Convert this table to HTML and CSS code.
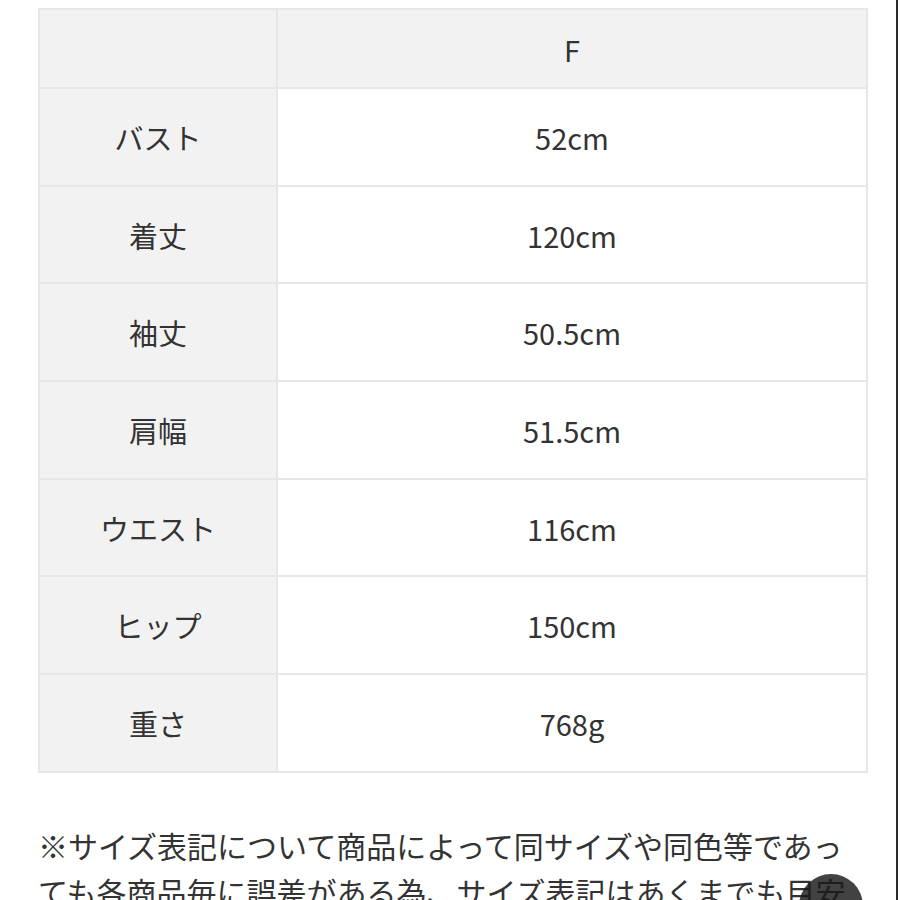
FILE: index.html
```html
<!DOCTYPE html>
<html lang="ja">
<head>
<meta charset="utf-8">
<title>サイズ表</title>
<link rel="stylesheet" href="styles.css">
</head>
<body>
<div class="page">
  <table class="size-table">
    <thead>
      <tr><th class="label head"></th><th class="value head">F</th></tr>
    </thead>
    <tbody>
      <tr><th class="label">バスト</th><td class="value">52cm</td></tr>
      <tr><th class="label">着丈</th><td class="value">120cm</td></tr>
      <tr><th class="label">袖丈</th><td class="value">50.5cm</td></tr>
      <tr><th class="label">肩幅</th><td class="value">51.5cm</td></tr>
      <tr><th class="label">ウエスト</th><td class="value">116cm</td></tr>
      <tr><th class="label">ヒップ</th><td class="value">150cm</td></tr>
      <tr><th class="label">重さ</th><td class="value">768g</td></tr>
    </tbody>
  </table>
  <p class="note">※サイズ表記について商品によって同サイズや同色等であっても各商品毎に誤差がある為、サイズ表記はあくまでも目安としてご参考ください。</p>
</div>
<div class="fab"></div>
</body>
</html>
```
FILE: styles.css
```css
html, body {
  margin: 0;
  padding: 0;
  background: #ffffff;
}
body {
  font-family: "Noto Sans CJK JP", "Noto Sans", sans-serif;
  color: #333333;
  overflow: hidden;
  height: 900px;
}
.page {
  width: 898px;
  height: 900px;
  box-sizing: border-box;
  border-right: 2px solid #2a2a2a;
  padding: 8px 0 0 38px;
  overflow: hidden;
}
.size-table {
  width: 830px;
  border-collapse: collapse;
  table-layout: fixed;
}
.size-table th,
.size-table td {
  border: 2px solid #e7e7e7;
  text-align: center;
  vertical-align: middle;
  font-size: 29px;
  font-weight: 400;
  height: 95.7px;
  padding: 0;
}
.size-table .head {
  height: 77px;
  background: #f2f2f2;
}
.label {
  width: 236px;
  background: #f2f2f2;
}
.value {
  background: #ffffff;
}
.note {
  margin: 49px 0 0 0;
  width: 830px;
  font-size: 30px;
  line-height: 46px;
  color: #333333;
}
.fab {
  position: fixed;
  left: 799px;
  top: 874px;
  width: 64px;
  height: 64px;
  border-radius: 50%;
  background: rgba(25, 25, 25, 0.82);
}
```
